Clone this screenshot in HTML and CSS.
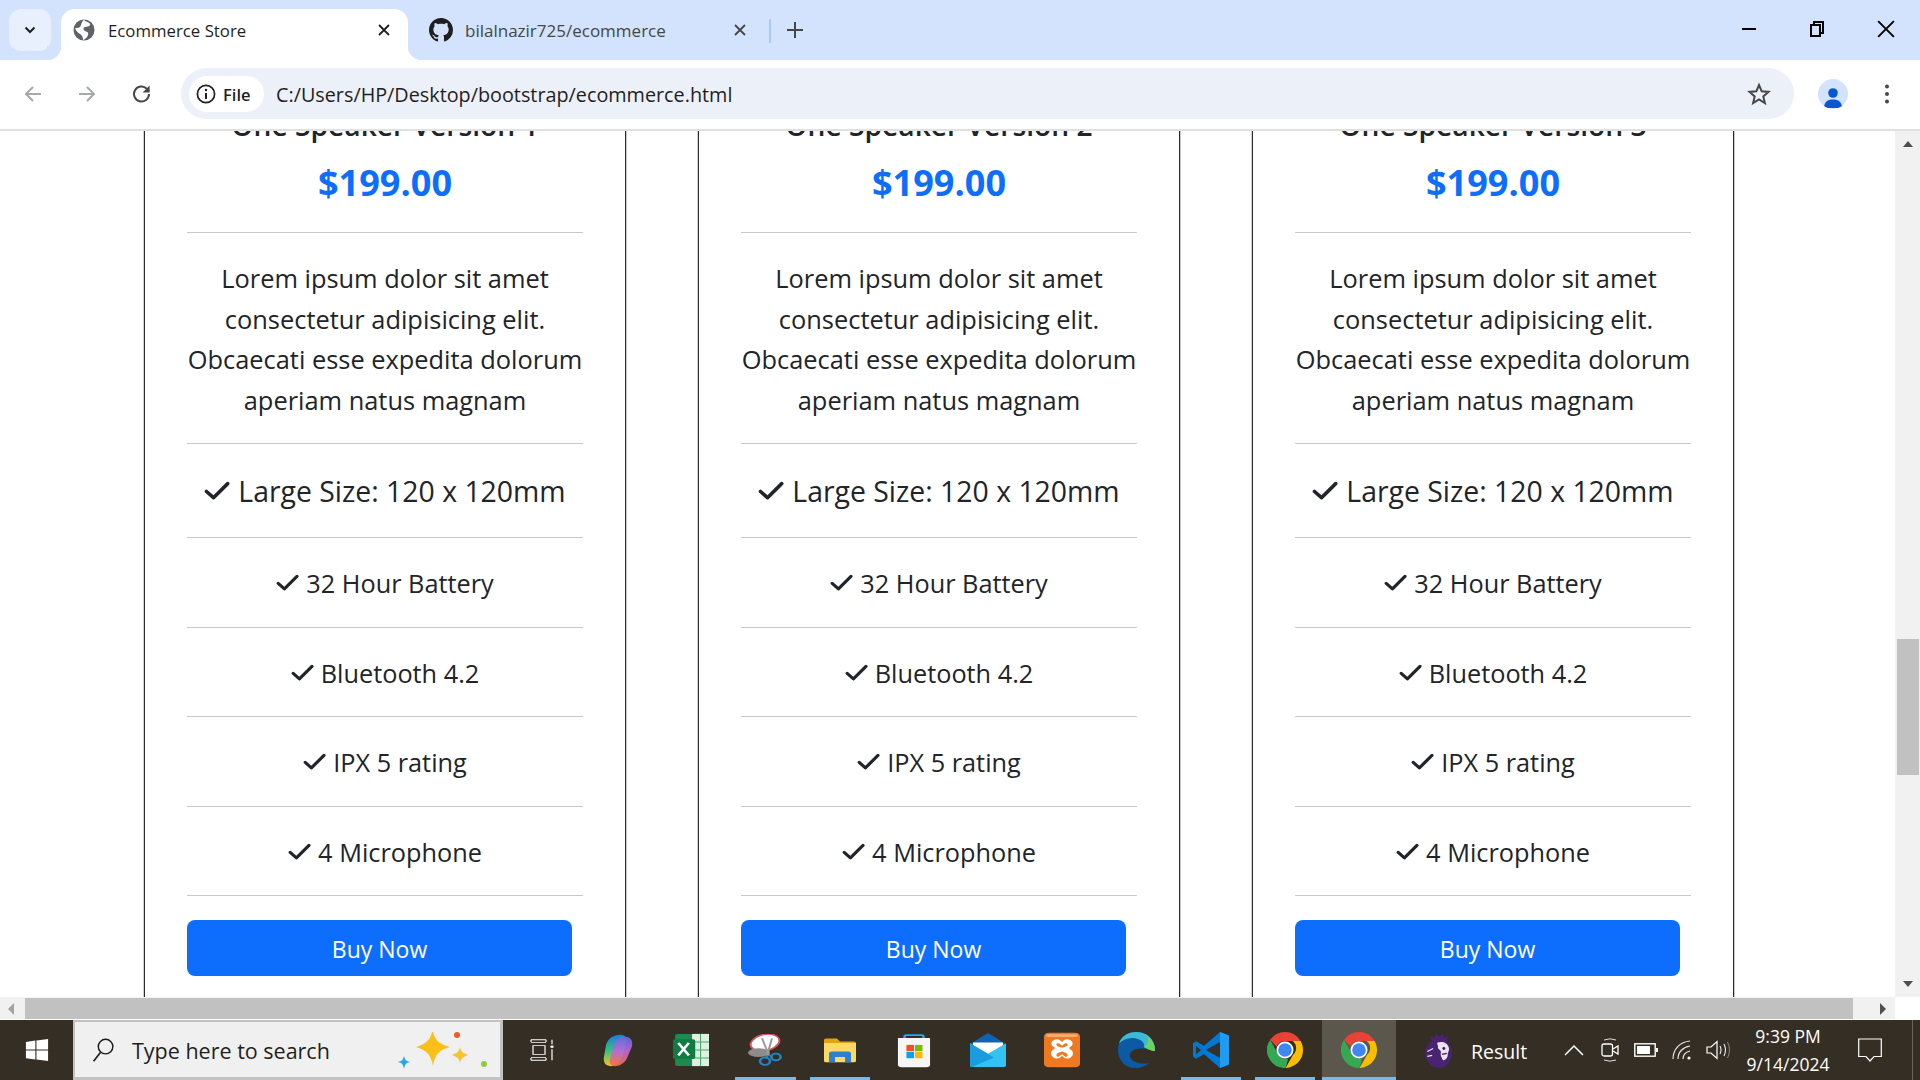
FILE: index.html
```html
<!DOCTYPE html>
<html lang="en">
<head>
<meta charset="utf-8">
<title>Ecommerce Store</title>
<link rel="stylesheet" href="styles.css">
</head>
<body>
<svg class="defs" width="0" height="0" aria-hidden="true">
  <symbol id="check" viewBox="0 0 26 19"><path d="M2.5 10.5l7 6.2L23.7 2.6" fill="none" stroke="#212529" stroke-width="3.6" stroke-linecap="round" stroke-linejoin="round"/></symbol>
  <symbol id="x" viewBox="0 0 14 14"><path d="M2 2l10 10M12 2L2 12" fill="none" stroke="currentColor" stroke-width="1.8"/></symbol>
  <symbol id="chrome" viewBox="0 0 36 36">
    <path d="M18 0a18 18 0 0 1 15.600 9H18a9 9 0 0 0-8.400 5.700L3.200 7.700A18 18 0 0 1 18 0z" fill="#ea4335"/>
    <path d="M33.600 9A18 18 0 0 1 18.600 36l7.300-13a9 9 0 0 0-.2-14z" fill="#fbbc04"/>
    <path d="M18.600 36A18 18 0 0 1 3.200 7.700l7.400 13.500a9 9 0 0 0 10.600 5.300z" fill="#34a853"/>
    <circle cx="18" cy="18" r="8.500" fill="#fff"/><circle cx="18" cy="18" r="6.800" fill="#4285f4"/>
  </symbol>
</svg>

<div class="window">
  <header class="tabstrip">
    <button class="tab-menu"><svg width="12" height="8" viewBox="0 0 12 8"><path d="M1.500 1.500L6 6l4.500-4.500" fill="none" stroke="#1f1f1f" stroke-width="2"/></svg></button>
    <div class="tab tab-active">
      <svg class="favicon" width="22" height="22" viewBox="0 0 22 22"><circle cx="11" cy="11" r="10.500" fill="#5f6368"/><path d="M11 1c2 2 5 2 6 4s-3 3-5 3-2 3 0 4 4 1 3 4-3 4-5 5c0-3-1-5-3-6S3 12 2 9c3 0 5 0 6-3s1-4 3-5z" fill="#fff"/></svg>
      <span class="tab-title">Ecommerce Store</span>
      <svg class="tab-close" width="14" height="14"><use href="#x"/></svg>
    </div>
    <div class="tab">
      <svg class="favicon" width="24" height="24" viewBox="0 0 16 16"><path fill="#1f1f1f" d="M8 0C3.580 0 0 3.580 0 8c0 3.540 2.290 6.530 5.470 7.590.4.070.55-.17.55-.38 0-.19-.01-.82-.01-1.490-2.010.37-2.530-.49-2.690-.94-.09-.23-.48-.94-.82-1.130-.28-.15-.68-.52-.01-.53.63-.01 1.080.58 1.230.82.72 1.210 1.870.87 2.330.66.07-.52.28-.87.51-1.070-1.780-.2-3.640-.89-3.640-3.950 0-.87.31-1.590.82-2.150-.08-.2-.36-1.020.08-2.120 0 0 .67-.21 2.200.82.64-.18 1.320-.27 2-.27s1.360.09 2 .27c1.530-1.040 2.200-.82 2.200-.82.44 1.100.16 1.920.08 2.120.51.56.82 1.270.82 2.150 0 3.070-1.870 3.750-3.650 3.950.29.25.54.73.54 1.480 0 1.070-.01 1.930-.01 2.200 0 .21.15.46.55.38A8.010 8.010 0 0 0 16 8c0-4.420-3.580-8-8-8z"/></svg>
      <span class="tab-title tab-title-muted">bilalnazir725/ecommerce</span>
      <svg class="tab-close tab-close-muted" width="14" height="14"><use href="#x"/></svg>
    </div>
    <span class="tab-sep"></span>
    <svg class="tab-new" width="18" height="18" viewBox="0 0 18 18"><path d="M9 1v16M1 9h16" stroke="#444746" stroke-width="2"/></svg>
    <div class="win-controls">
      <svg width="68" height="16" viewBox="0 0 16 16"><path d="M1 8h14" stroke="#000" stroke-width="2"/></svg>
      <svg width="68" height="18" viewBox="0 0 16 18"><path d="M2 5h9v11H2zM5 5V2h9v11h-3" fill="none" stroke="#000" stroke-width="2"/></svg>
      <svg class="win-close" width="68" height="18" viewBox="0 0 16 16"><path d="M1 1l14 14M15 1L1 15" stroke="#000" stroke-width="1.700"/></svg>
    </div>
  </header>

  <nav class="toolbar">
    <svg class="nav-icon" width="20" height="20" viewBox="0 0 20 20"><path d="M18 10H3M10 3l-7 7 7 7" fill="none" stroke="#a6a8ab" stroke-width="2"/></svg>
    <svg class="nav-icon" width="20" height="20" viewBox="0 0 20 20"><path d="M2 10h15M10 3l7 7-7 7" fill="none" stroke="#a6a8ab" stroke-width="2"/></svg>
    <svg class="nav-icon" width="22" height="22" viewBox="0 0 22 22"><path d="M18 11a7.500 7.500 0 1 1-2.200-5.300L18 8" fill="none" stroke="#474747" stroke-width="2"/><path d="M18.600 2.500v7h-7z" fill="#474747"/></svg>
    <div class="omnibox">
      <div class="chip">
        <svg width="20" height="20" viewBox="0 0 20 20"><circle cx="10" cy="10" r="8.600" fill="none" stroke="#1f1f1f" stroke-width="1.700"/><path d="M10 9v6" stroke="#1f1f1f" stroke-width="2"/><circle cx="10" cy="6" r="1.200" fill="#1f1f1f"/></svg>
        <span class="chip-label">File</span>
      </div>
      <span class="url">C:/Users/HP/Desktop/bootstrap/ecommerce.html</span>
      <svg class="star" width="24" height="24" viewBox="0 0 24 24"><path d="M12 3l2.700 6.300 6.800.6-5.200 4.500 1.600 6.700L12 17.400l-5.900 3.700 1.600-6.700-5.200-4.500 6.800-.6z" fill="none" stroke="#474747" stroke-width="2"/></svg>
    </div>
    <div class="avatar"><svg width="20" height="22" viewBox="0 0 20 22"><circle cx="10" cy="6" r="4.800" fill="#0b57d0"/><path d="M1 21c0-6 3.500-8.500 9-8.500s9 2.500 9 8.500z" fill="#0b57d0"/></svg></div>
    <svg class="kebab" width="6" height="22" viewBox="0 0 6 22"><circle cx="3" cy="3.500" r="2" fill="#474747"/><circle cx="3" cy="11" r="2" fill="#474747"/><circle cx="3" cy="18.500" r="2" fill="#474747"/></svg>
  </nav>

  <div class="viewport">
    <main class="page">
      <article class="card">
        <h3 class="card-title">One Speaker Version 1</h3>
        <div class="price">$199.00</div>
        <p class="row row-desc">Lorem ipsum dolor sit amet consectetur adipisicing elit. Obcaecati esse expedita dolorum aperiam natus magnam</p>
        <div class="row row-lg"><svg class="chk-lg"><use href="#check"/></svg> Large Size: 120 x 120mm</div>
        <div class="row row-a"><svg class="chk"><use href="#check"/></svg> 32 Hour Battery</div>
        <div class="row row-b"><svg class="chk"><use href="#check"/></svg> Bluetooth 4.2</div>
        <div class="row row-a"><svg class="chk"><use href="#check"/></svg> IPX 5 rating</div>
        <div class="row row-b"><svg class="chk"><use href="#check"/></svg> 4 Microphone</div>
        <button class="buy">Buy Now</button>
      </article>
      <article class="card">
        <h3 class="card-title">One Speaker Version 2</h3>
        <div class="price">$199.00</div>
        <p class="row row-desc">Lorem ipsum dolor sit amet consectetur adipisicing elit. Obcaecati esse expedita dolorum aperiam natus magnam</p>
        <div class="row row-lg"><svg class="chk-lg"><use href="#check"/></svg> Large Size: 120 x 120mm</div>
        <div class="row row-a"><svg class="chk"><use href="#check"/></svg> 32 Hour Battery</div>
        <div class="row row-b"><svg class="chk"><use href="#check"/></svg> Bluetooth 4.2</div>
        <div class="row row-a"><svg class="chk"><use href="#check"/></svg> IPX 5 rating</div>
        <div class="row row-b"><svg class="chk"><use href="#check"/></svg> 4 Microphone</div>
        <button class="buy">Buy Now</button>
      </article>
      <article class="card">
        <h3 class="card-title">One Speaker Version 3</h3>
        <div class="price">$199.00</div>
        <p class="row row-desc">Lorem ipsum dolor sit amet consectetur adipisicing elit. Obcaecati esse expedita dolorum aperiam natus magnam</p>
        <div class="row row-lg"><svg class="chk-lg"><use href="#check"/></svg> Large Size: 120 x 120mm</div>
        <div class="row row-a"><svg class="chk"><use href="#check"/></svg> 32 Hour Battery</div>
        <div class="row row-b"><svg class="chk"><use href="#check"/></svg> Bluetooth 4.2</div>
        <div class="row row-a"><svg class="chk"><use href="#check"/></svg> IPX 5 rating</div>
        <div class="row row-b"><svg class="chk"><use href="#check"/></svg> 4 Microphone</div>
        <button class="buy">Buy Now</button>
      </article>
    </main>
    <aside class="vscroll">
      <span class="arrow arrow-up"></span>
      <span class="vthumb"></span>
      <span class="arrow arrow-down"></span>
    </aside>
  </div>

  <div class="hscroll">
    <span class="hend hend-left"><span class="arrow arrow-left"></span></span>
    <span class="hthumb"></span>
    <span class="hend hend-right"><span class="arrow arrow-right"></span></span>
    <span class="hcorner"></span>
  </div>

  <footer class="taskbar">
    <div class="start"><svg width="24" height="24" viewBox="0 0 26 26"><path fill="#fff" d="M1 4.200l10.200-1.400v9.600H1zM12.400 2.600L25 1v11.400H12.400zM1 13.600h10.200v9.700L1 21.900zM12.400 13.600H25V25l-12.600-1.700z"/></svg></div>
    <div class="search">
      <svg class="search-glass" width="24" height="24" viewBox="0 0 26 28"><circle cx="16" cy="10" r="8.500" fill="none" stroke="#1b1b1b" stroke-width="1.700"/><path d="M10 17L2 27" stroke="#1b1b1b" stroke-width="1.900"/></svg>
      <span class="search-text">Type here to search</span>
      <svg class="sparkles" width="90" height="37" viewBox="0 0 90 37">
        <path d="M35 0c2 8 6 12 17 15-11 3-15 7-17 19-2-12-7-16-17-19 10-3 15-7 17-19z" fill="#fbbf1a"/>
        <path d="M62 15c1 5 3 6 8 8-5 2-7 3-8 8-1-5-3-6-8-8 5-2 7-3 8-8z" fill="#f9c22e"/>
        <circle cx="59" cy="3" r="3" fill="#f0592a"/><circle cx="86" cy="32" r="3" fill="#8fc93a"/>
        <path d="M6 24c1 4 2 5 6 6-4 1-5 2-6 7-1-5-2-6-6-7 4-1 5-2 6-6z" fill="#1fa8ea"/>
      </svg>
    </div>
    <div class="taskview"><svg width="24" height="22" viewBox="0 0 24 30" preserveAspectRatio="none"><path d="M1 1h15M1 5h15M3 9h12v12H3zM1 25h15M1 29h15M1 1v3M16 1v3M1 26v3M16 26v3M22 1v6M22 14v15" fill="none" stroke="#fff" stroke-width="1.200"/><rect x="20.500" y="9" width="3" height="3" fill="#fff"/></svg></div>

    <div class="slot"><svg width="36" height="33" viewBox="0 0 36 38" preserveAspectRatio="none">
      <path d="M7 13C9 5 15 1 21 1c5 0 7 3 6 9l-3 14C22 32 17 37 12 37c-6 0-8-5-7-11z" fill="url(#cp1)"/>
      <path d="M29 25c-2 8-8 12-13 12-4 0-6-3-5-8l3-14C16 7 20 3 25 3c7 0 9 5 8 11z" fill="url(#cp2)" opacity=".92"/>
      <defs><linearGradient id="cp1" x1="0" y1="0" x2="0" y2="1"><stop offset="0" stop-color="#1c7be0"/><stop offset=".5" stop-color="#35c27e"/><stop offset="1" stop-color="#f4c22b"/></linearGradient><linearGradient id="cp2" x1="0" y1="0" x2="0" y2="1"><stop offset="0" stop-color="#5b6de0"/><stop offset=".5" stop-color="#c265d8"/><stop offset="1" stop-color="#f4703a"/></linearGradient></defs>
    </svg></div>
    <div class="slot"><svg width="36" height="34" viewBox="0 0 34 38" preserveAspectRatio="none"><rect x="2" y="1" width="32" height="36" rx="2" fill="#1f8a4f"/><path d="M18 1h16v36H18z" fill="#dff0e2"/><path d="M18 10h16M18 19h16M18 28h16M26 1v36" stroke="#4aa66d" stroke-width="1"/><rect x="0" y="7" width="21" height="22" rx="2" fill="#107c41"/><path d="M5 11l10 14M15 11L5 25" stroke="#fff" stroke-width="2.600"/></svg></div>
    <div class="slot slot-open"><svg width="34" height="33" viewBox="0 0 34 46" preserveAspectRatio="none"><ellipse cx="17" cy="12" rx="15" ry="11" fill="#fff" stroke="#d9505a" stroke-width="2" transform="rotate(-25 17 12)"/><ellipse cx="11" cy="26" rx="11" ry="6" fill="#8c8c8c"/><path d="M14 6l7 24M24 6L19 30" stroke="#9a9a9a" stroke-width="2"/><circle cx="17" cy="38" r="5" fill="none" stroke="#1f86c9" stroke-width="2.600"/><circle cx="28" cy="32" r="4.600" fill="none" stroke="#1f86c9" stroke-width="2.600"/><path d="M19 30l-1 4M21 30l3 1" stroke="#1f86c9" stroke-width="2.600"/></svg></div>
    <div class="slot slot-open"><svg width="32" height="26" viewBox="0 0 32 34" preserveAspectRatio="none"><path d="M0 4a2 2 0 0 1 2-2h11l3 4h14a2 2 0 0 1 2 2v4H0z" fill="#e2a30f"/><path d="M0 8h32v23a2 2 0 0 1-2 2H2a2 2 0 0 1-2-2z" fill="#fbd968"/><path d="M5 33V22a3 3 0 0 1 3-3h16a3 3 0 0 1 3 3v11h-6v-7h-10v7z" fill="#2f7fd1"/></svg></div>
    <div class="slot"><svg width="34" height="35" viewBox="0 0 36 50" preserveAspectRatio="none"><path d="M8 11V5a2 2 0 0 1 2-2h16a2 2 0 0 1 2 2v6" fill="none" stroke="#28a8ea" stroke-width="2.600"/><path d="M1 7h34v38a4 4 0 0 1-4 4H5a4 4 0 0 1-4-4z" fill="#f6f6f6"/><rect x="10" y="17" width="8" height="9" fill="#f25022"/><rect x="19" y="17" width="8" height="9" fill="#7fba00"/><rect x="10" y="27" width="8" height="9" fill="#00a4ef"/><rect x="19" y="27" width="8" height="9" fill="#ffb900"/></svg></div>
    <div class="slot"><svg width="36" height="34" viewBox="0 0 36 46" preserveAspectRatio="none"><path d="M0 15L18 0l18 15v4H0z" fill="#0f63b5"/><path d="M3 13h30v18L18 40 3 31z" fill="#fff"/><path d="M0 14l18 14 18-14v30a2 2 0 0 1-2 2H2a2 2 0 0 1-2-2z" fill="#32c3f4"/><path d="M0 14l24 19-22 13a2 2 0 0 1-2-2z" fill="#1a9de0"/></svg></div>
    <div class="slot"><svg width="36" height="36" viewBox="0 0 36 50" preserveAspectRatio="none"><rect x="0" y="1" width="36" height="48" rx="5" fill="#f0781f"/><rect x="2" y="3" width="32" height="4" rx="2" fill="#f7ad72"/><path d="M10 11c4-2 6 0 8 3 2-3 4-5 8-3 4 3 3 8 0 10-1 1-1 2 0 3 4 3 4 8 0 12-4 2-6 0-8-3-2 3-4 5-8 3-4-4-4-9 0-12 1-1 1-2 0-3-3-2-4-7 0-10zm3 5c-1 1-1 3 1 4l4 2 4-2c2-1 2-3 1-4-2-1-3 1-5 3-2-2-3-4-5-3zm5 11l-4 2c-2 1-2 4-1 5 2 1 3-1 5-3 2 2 3 4 5 3 1-1 1-4-1-5z" fill="#fff" fill-rule="evenodd"/></svg></div>
    <div class="slot"><svg width="37" height="36" viewBox="0 0 37 50" preserveAspectRatio="none"><path d="M37 25C37 10 29 0 18 0 8 0 0 10 0 25c0 14 7 25 17 25 6 0 11-3 14-7-8 2-17 0-19-9-1-7 5-12 13-11 6 1 12 6 12 2z" fill="#0c59a4"/><path d="M37 25C37 10 29 0 18 0 10 0 3 6 1 16c4-6 11-9 17-7 7 2 9 8 8 12 4 3 11 8 11 4z" fill="#3bb9d7"/><path d="M37 25c0-9-4-16-9-20 4 5 2 12-2 16 4 3 11 8 11 4z" fill="#6fd25f"/></svg></div>
    <div class="slot slot-open"><svg width="36" height="36" viewBox="0 0 36 50" preserveAspectRatio="none"><path d="M36 5L27 0 11 19 3 13l-3 3v18l3 3 8-6 16 19 9-5z" fill="#0078d4"/><path d="M27 0l9 5v40l-9 5z" fill="#1f9cf0"/><path d="M27 14v22L13 25z" fill="#35302a"/><path d="M3 19l5 6-5 6z" fill="#35302a"/></svg></div>
    <div class="slot slot-open"><svg width="36" height="36"><use href="#chrome"/></svg></div>
    <div class="slot slot-open slot-active"><svg width="36" height="36"><use href="#chrome"/></svg></div>

    <div class="result">
      <svg width="30" height="36" viewBox="0 0 30 37"><path d="M8 9l-2-5 4 2 2-5 3 4 4-4 1 5 4-2-1 6c4 3 6 8 5 14-1 7-6 13-13 13-8 0-14-7-14-16C1 16 4 11 8 9z" fill="#4a2470"/><path d="M13 11c5-2 11 0 12 5 1 3-1 5-1 7 0 3-2 6-5 6-1-3-3-5-2-8 0-3-4-3-3-6z" fill="#e9e3f2"/><path d="M3 20l6-3M3 25l5-1" stroke="#e9e3f2" stroke-width="1.200"/><circle cx="20" cy="17" r="1.500" fill="#3d195b"/><path d="M18 23l5-1" stroke="#3d195b" stroke-width="1.500"/></svg>
      <span class="result-text">Result</span>
    </div>

    <div class="tray">
      <span class="tray-slot"><svg width="20" height="12" viewBox="0 0 20 12"><path d="M1 11l9-9 9 9" fill="none" stroke="#fff" stroke-width="1.500"/></svg></span>
      <span class="tray-slot"><svg width="18" height="24" viewBox="0 0 18 24"><rect x="1" y="6" width="10.500" height="12" rx="2" fill="none" stroke="#fff" stroke-width="1.300"/><path d="M12 11l5-3v8l-5-3" fill="none" stroke="#fff" stroke-width="1.300"/><path d="M3 2q6-2.400 12 0M3 22q6 2.400 12 0" fill="none" stroke="#ddd" stroke-width="1"/></svg></span>
      <span class="tray-slot"><svg width="24" height="14" viewBox="0 0 24 14"><rect x=".8" y=".8" width="20.400" height="12.400" fill="none" stroke="#fff" stroke-width="1.400"/><rect x="3" y="3" width="13" height="8" fill="#fff"/><rect x="22" y="5" width="2" height="4" fill="#fff"/></svg></span>
      <span class="tray-slot"><svg width="20" height="20" viewBox="0 0 20 20"><path d="M1 19C1 9 8 2 18 1M6 19c0-7 5-12 12-13M11 19c0-4 3-7 7-8" fill="none" stroke="#e8e8e8" stroke-width="1.200"/><circle cx="17" cy="18" r="1.600" fill="#fff"/></svg></span>
      <span class="tray-slot"><svg width="24" height="20" viewBox="0 0 24 20"><path d="M1 7h4l6-5.500v17L5 13H1z" fill="none" stroke="#fff" stroke-width="1.200"/><path d="M14 6q2 4 0 8M18 4q3 6 0 12" fill="none" stroke="#eee" stroke-width="1.100"/><path d="M21.500 2q4 8 0 16" fill="none" stroke="#888" stroke-width="1"/></svg></span>
    </div>

    <div class="clock"><span>9:39 PM</span><span>9/14/2024</span></div>
    <div class="notify"><svg width="24" height="24" viewBox="0 0 24 24"><path d="M.7 1h22.600v17.500H16l-4 4.500-4-4.500H.7z" fill="none" stroke="#fff" stroke-width="1.200"/></svg></div>
    <span class="peek"></span>
  </footer>
</div>
</body>
</html>
```

FILE: styles.css
```css
* { box-sizing: border-box; }
html, body { margin: 0; height: 100%; overflow: hidden; }
body { font-family: "Open Sans", "Noto Sans", sans-serif; color: #212529; background: #fff; }
.defs { position: absolute; }
svg { display: block; flex: none; }

.window { display: flex; flex-direction: column; height: 1080px; }

/* tab strip */
.tabstrip { flex: none; height: 60px; background: #d3e3fd; display: flex; align-items: flex-start; padding: 9px 0 0 9px; }
.tab-menu { width: 42px; height: 42px; border: 0; padding: 0; border-radius: 12px; background: #e8f0fe; display: flex; align-items: center; justify-content: center; margin-right: 10px; }
.tab { width: 347px; height: 51px; display: flex; align-items: center; padding: 0 16px 9px 12px; position: relative; border-radius: 14px 14px 0 0; }
.tab-active { background: #fff; }
.tab-active::before, .tab-active::after { content: ""; position: absolute; bottom: 0; width: 14px; height: 14px; }
.tab-active::before { left: -14px; background: radial-gradient(circle at 0 0, #d3e3fd 14px, #fff 14.500px); }
.tab-active::after { right: -14px; background: radial-gradient(circle at 100% 0, #d3e3fd 14px, #fff 14.500px); }
.favicon { margin-right: 13px; }
.tab-title { font-size: 16.800px; color: #1f1f1f; white-space: nowrap; flex: 1; padding-top: 1px; }
.tab-title-muted { color: #444746; font-size: 17px; }
.tab-close { color: #1f1f1f; margin-right: 1px; }
.tab-close-muted { color: #444746; }
.tab + .tab { width: 361px; padding-left: 21px; padding-right: 21px; }
.tab + .tab .favicon { margin-right: 12px; }
.tab-sep { width: 2px; height: 24px; background: #a8c7fa; margin: 10px 0 0 0; }
.tab-new { margin: 12px 0 0 15px; }
.win-controls { margin-left: auto; display: flex; align-items: center; height: 40px; }
.win-controls svg:first-child { margin-right: 0; margin-left: 0; }
.win-controls .win-close { margin-left: 1px; }

/* toolbar */
.toolbar { flex: none; height: 71px; background: #fff; border-bottom: 2px solid #e0e0e0; border-radius: 12px 12px 0 0; display: flex; align-items: center; padding: 0 0 2px 0; }
.nav-icon { margin-left: 24px; margin-right: 10px; }
.nav-icon:first-child { margin-left: 23px; }
.omnibox { margin-left: 18px; width: 1613px; height: 51px; background: #ecf0f9; border-radius: 26px; display: flex; align-items: center; padding: 0 23px 0 8px; flex: none; }
.chip { width: 75px; height: 36px; background: #fff; border-radius: 18px; display: flex; align-items: center; padding-left: 7px; gap: 7px; }
.chip-label { font-size: 16.500px; font-weight: 600; color: #1f1f1f; padding-top: 1px; }
.url { margin-left: 12px; font-size: 19.800px; color: #1f1f1f; flex: 1; white-space: nowrap; padding-top: 1px; }
.avatar { width: 30px; height: 30px; border-radius: 50%; background: #d3e3fd; margin-left: 24px; display: flex; justify-content: center; align-items: flex-end; overflow: hidden; }
.kebab { margin-left: 36px; }

/* page */
.viewport { flex: 1; min-height: 0; display: flex; }
.page { flex: 1; min-width: 0; overflow: hidden; display: flex; gap: 72px; padding-left: 144px; background: #fff; }
.card { flex: none; width: 482px; height: 960px; border-left: 1px solid #2b2b2b; border-right: 1px solid #2b2b2b; box-shadow: -1px 0 0 #d0d0d0, 1px 0 0 #c8c8c8; padding: 0 42px; margin-top: -26px; text-align: center; }
.card-title { margin: 0; font-size: 28.200px; font-weight: 600; line-height: 40px; color: #212529; white-space: nowrap; }
.price { margin-top: 13px; font-size: 36.100px; font-weight: 700; line-height: 48px; color: #0d6efd; height: 75px; border-bottom: 1px solid #c8c8c8; }
.row { margin: 0; display: flex; align-items: center; justify-content: center; gap: 7px; border-bottom: 1px solid #c8c8c8; font-size: 25.300px; white-space: nowrap; }
.row-desc { display: block; height: 211px; padding: 25px 2px 0; line-height: 40.500px; white-space: normal; font-size: 25.400px; margin: 0 -2px; border: 0; box-shadow: inset 0 -1px 0 #c8c8c8; clip-path: inset(0 2px); }
.row-lg { height: 94px; font-size: 28.400px; gap: 8px; }
.row-a { height: 90px; }
.row-b { height: 89px; padding-top: 1px; }
.chk-lg { width: 26px; height: 19px; margin-top: -1px; }
.chk { width: 23px; height: 17px; margin-top: -1px; }
.buy { display: block; margin-top: 24px; width: 385px; height: 56px; border: 0; border-radius: 8px; background: #0d6efd; color: #fff; font: 400 23px "Open Sans", sans-serif; padding: 2px 0 0; }

/* scrollbars */
.vscroll { flex: none; width: 25px; background: #f1f1f1; display: flex; flex-direction: column; align-items: center; padding-left: 1px; }
.vthumb { width: 22px; height: 136px; background: #c1c1c1; margin-top: 492px; }
.arrow { display: block; width: 0; height: 0; border-style: solid; border-color: transparent; }
.arrow-up { margin-top: 10px; border-width: 0 5px 6px; border-bottom-color: #505050; }
.arrow-down { margin-top: auto; margin-bottom: 10px; border-width: 6px 5px 0; border-top-color: #505050; }
.hscroll { flex: none; height: 23px; background: #f1f1f1; display: flex; align-items: center; border-bottom: 1px solid #fff; padding-top: 1px; }
.hend { height: 21px; display: flex; align-items: center; justify-content: center; flex: none; }
.hend-left { width: 25px; }
.hend-right { width: 42px; }
.hthumb { width: 1828px; height: 21px; background: #c1c1c1; flex: none; }
.hcorner { flex: 1; height: 23px; background: #fff; margin-top: -1px; }
.arrow-left { border-width: 6px 6px 6px 0; border-right-color: #a3a3a3; margin-right: 3px; }
.arrow-right { border-width: 6px 0 6px 6px; border-left-color: #505050; margin-left: 18px; }

/* taskbar */
.taskbar { flex: none; height: 60px; background: #352e24; display: flex; align-items: center; position: relative; color: #fff; }
.start { width: 73px; flex: none; display: flex; justify-content: center; padding-bottom: 1px; }
.search { width: 430px; height: 60px; flex: none; background: #f0f0f0; border: 2px solid #c2c2c2; border-width: 2px 3px 3px 2px; display: flex; align-items: center; padding-left: 16px; }
.search-text { margin-left: 17px; font-size: 21.500px; color: #1f1f1f; white-space: nowrap; flex: 1; padding-top: 2px; }
.sparkles { margin-right: 12px; margin-top: 2px; }
.taskview { width: 77px; flex: none; display: flex; justify-content: center; }
.slot { width: 74.200px; height: 60px; display: flex; align-items: center; justify-content: center; position: relative; flex: none; }
.slot-open::after { content: ""; position: absolute; left: 7px; right: 7px; bottom: 0; height: 3px; background: #76b9ed; }
.slot-active { background: #5c574c; }
.slot-active::after { left: 0; right: 0; }
.result { display: flex; align-items: center; margin-left: 28px; width: 132px; flex: none; }
.result-text { margin-left: 17px; font-size: 19.500px; color: #fff; padding-top: 2px; }
.tray { width: 180px; flex: none; display: flex; align-items: center; }
.tray-slot { width: 36px; display: flex; justify-content: center; }
.clock { width: 104px; flex: none; display: flex; flex-direction: column; align-items: center; font-size: 17.500px; line-height: 28px; white-space: nowrap; }
.notify { width: 60px; flex: none; display: flex; justify-content: center; }
.peek { position: absolute; right: 7px; top: 0; bottom: 0; width: 1px; background: #6a665c; }
```
